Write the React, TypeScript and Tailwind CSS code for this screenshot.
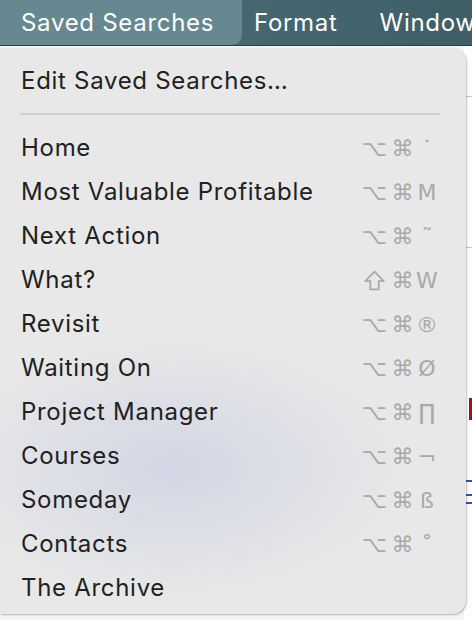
import React from "react";

const items: { label: string; mod: string; key: string }[] = [
  { label: "Home", mod: "⌥", key: "˙" },
  { label: "Most Valuable Profitable", mod: "⌥", key: "M" },
  { label: "Next Action", mod: "⌥", key: "˜" },
  { label: "What?", mod: "⇧", key: "W" },
  { label: "Revisit", mod: "⌥", key: "®" },
  { label: "Waiting On", mod: "⌥", key: "Ø" },
  { label: "Project Manager", mod: "⌥", key: "∏" },
  { label: "Courses", mod: "⌥", key: "¬" },
  { label: "Someday", mod: "⌥", key: "ß" },
  { label: "Contacts", mod: "⌥", key: "˚" },
  { label: "The Archive", mod: "", key: "" },
];

function ShiftIcon() {
  return (
    <svg width="21" height="21" viewBox="0 0 20 20" fill="none" stroke="#a9a9a9" strokeWidth="1.7" strokeLinejoin="round">
      <path d="M10 1.5 L18.8 10.5 H14 V18.5 H6 V10.5 H1.2 Z" />
    </svg>
  );
}

export default function App() {
  return (
    <div
      className="relative w-[472px] h-[620px] overflow-hidden bg-[#f4f4f4]"
      style={{ fontFamily: "Inter, 'Noto Sans', sans-serif" }}
    >
      {/* menu bar */}
      <div className="flex h-[46px] items-center bg-gradient-to-r from-[#4d717a] to-[#3f5f67] text-[24px] tracking-[0.7px] text-white border-b border-[#2c3f44] whitespace-nowrap">
        <div className="flex h-[45px] w-[242px] shrink-0 items-center rounded-br-[10px] bg-[#668891] pl-[21px]">
          Saved Searches
        </div>
        <div className="shrink-0 pl-[12px]">Format</div>
        <div className="shrink-0 pl-[42px]">Window</div>
      </div>

      {/* background window content peeking on right */}
      <div className="absolute right-0 top-[46px] h-[574px] w-[8px] bg-white">
        <div className="mt-[50px] h-[1px] bg-[#c8c8c8]" />
        <div className="mt-[150px] h-[1px] bg-[#c8c8c8]" />
        <div className="mt-[150px] h-[22px] w-[3px] ml-auto bg-[#a01010]" />
        <div className="mt-[60px] h-[2px] bg-[#3050c0]" />
        <div className="mt-[12px] h-[2px] bg-[#3050c0]" />
        <div className="mt-[6px] h-[2px] bg-[#3050c0]" />
        <div className="mt-[170px] h-[16px] bg-[#2040b0]" />
      </div>

      {/* dropdown menu */}
      <div
        className="absolute left-0 top-[48px] w-[466px] h-[566px] rounded-tr-[14px] rounded-br-[14px] bg-[#e8e8e8] shadow-[1px_1px_2px_rgba(0,0,0,0.25)] pt-[11px] text-[#212121] text-[24px] tracking-[0.7px]"
        style={{
          backgroundImage:
            "radial-gradient(ellipse 230px 130px at 175px 420px, rgba(208,212,228,0.9), rgba(232,232,232,0) 100%)",
        }}
      >
        <div className="flex h-[44px] items-center pl-[21px]">Edit Saved Searches…</div>
        <div className="mt-[10px] mb-[11px] ml-[20px] mr-[26px] h-[2px] bg-[#cfcfcf]" />
        {items.map((it) => (
          <div key={it.label} className="flex h-[44px] items-center pl-[21px]">
            <span className="flex-1">{it.label}</span>
            {it.mod && (
              <span
                className="flex items-center text-[#a9a9a9] text-[22px] tracking-normal mr-[28px]"
                style={{ fontFamily: "'DejaVu Sans', sans-serif" }}
              >
                <span className="flex w-[29px] items-center justify-center">
                  {it.mod === "⇧" ? <ShiftIcon /> : "⌥"}
                </span>
                <span className="flex w-[27px] items-center justify-center">⌘</span>
                <span className="w-[22px] text-center">{it.key}</span>
              </span>
            )}
          </div>
        ))}
      </div>
    </div>
  );
}
